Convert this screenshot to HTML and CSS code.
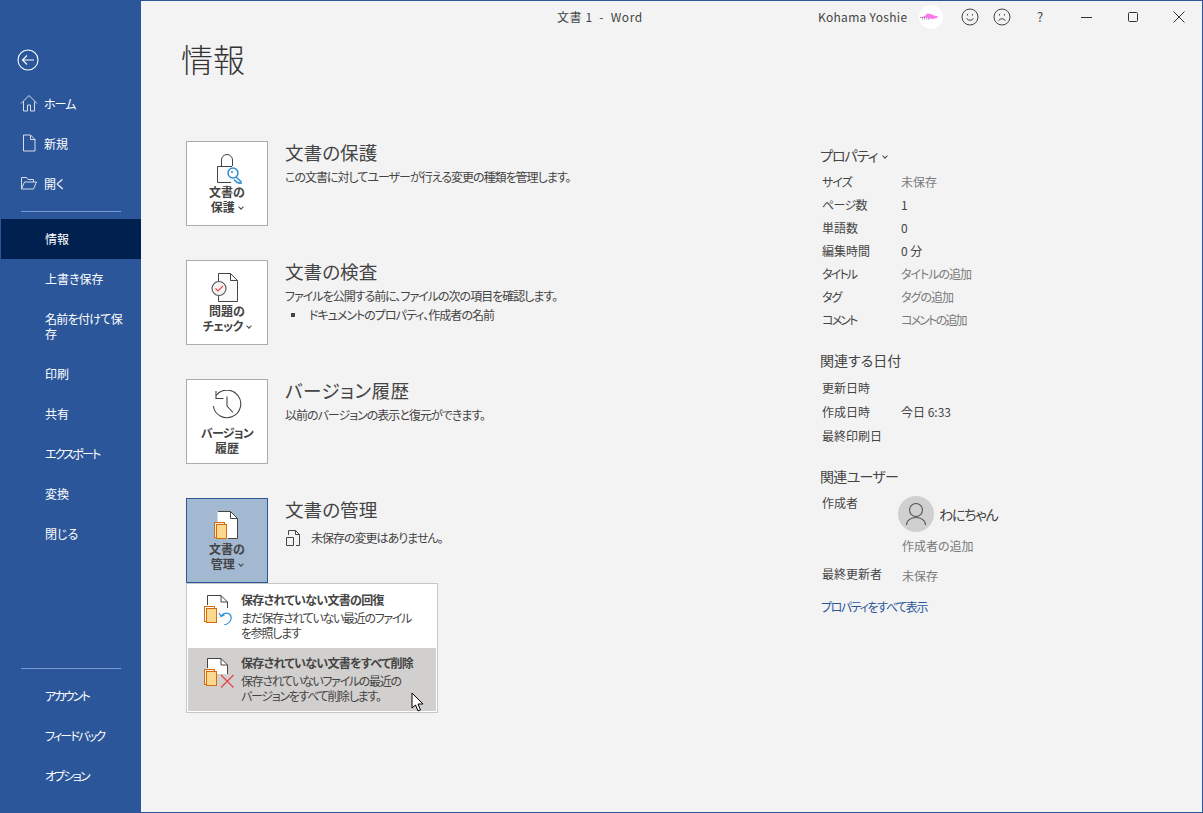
FILE: index.html
```html
<!DOCTYPE html>
<html lang="ja">
<head>
<meta charset="utf-8">
<title>文書 1 - Word</title>
<link rel="stylesheet" href="styles.css">
</head>
<body>
<div class="window">
  <nav class="sidebar">
    <div class="back">
      <svg width="24" height="24" viewBox="0 0 24 24" fill="none" stroke="#fff" stroke-width="1.1"><circle cx="12" cy="12" r="10"/><path d="M18 12H6.500M11 7.500 6.500 12l4.500 4.500"/></svg>
    </div>
    <a class="nav-item with-icon">
      <svg class="nav-icon" width="18" height="18" viewBox="0 0 18 18" fill="none" stroke="#d8dde8" stroke-width="1"><path d="M1 9.500 9 1.500l8 8M3.500 7.500V17H7.500V11h3v6h4V7.500"/></svg>
      <span class="kana">ホーム</span>
    </a>
    <a class="nav-item with-icon">
      <svg class="nav-icon" width="18" height="18" viewBox="0 0 18 18" fill="none" stroke="#d8dde8" stroke-width="1"><path d="M3.500 1h7l4.500 4.500V17h-11.500zM10.500 1v4.500h4.500"/></svg>
      <span>新規</span>
    </a>
    <a class="nav-item with-icon">
      <svg class="nav-icon" width="18" height="18" viewBox="0 0 18 18" fill="none" stroke="#d8dde8" stroke-width="1"><path d="M1.500 15V3.500h5l1.500 2h5.500V8M1.500 15l3-7H16.500l-3 7z"/></svg>
      <span>開く</span>
    </a>
    <div class="nav-rule rule-top"></div>
    <a class="nav-item active">情報</a>
    <a class="nav-item">上書き保存</a>
    <a class="nav-item tall"><span class="mixed">名前を付けて保存</span></a>
    <a class="nav-item">印刷</a>
    <a class="nav-item">共有</a>
    <a class="nav-item"><span class="kana-tight">エクスポート</span></a>
    <a class="nav-item">変換</a>
    <a class="nav-item">閉じる</a>
    <div class="nav-spacer"></div>
    <div class="nav-rule rule-bottom"></div>
    <a class="nav-item"><span class="kana-tight">アカウント</span></a>
    <a class="nav-item"><span class="kana-tight">フィードバック</span></a>
    <a class="nav-item"><span class="kana-tight">オプション</span></a>
  </nav>

  <main class="main">
    <header class="titlebar">
      <div class="doc-title">文書 1&nbsp;&nbsp;-&nbsp;&nbsp;Word</div>
      <div class="user">Kohama Yoshie</div>
      <div class="user-pic">
        <svg width="24" height="24" viewBox="0 0 24 24"><circle cx="12" cy="12" r="12" fill="#fff"/><path d="M1 12.500 6 11l2-2.500 4 .5 3 1.500 4 1-1 1.500-5 1-4-.5-3-1z" fill="#ff78f0"/><path d="M1 12.500h6M3 14h8" stroke="#333" stroke-width=".6" stroke-dasharray="1 1"/></svg>
      </div>
      <svg class="face smile" width="18" height="18" viewBox="0 0 18 18" fill="none" stroke="#444"><circle cx="9" cy="9" r="8"/><path d="M5.500 10.500q3.500 3.500 7 0"/><path d="M6.500 6v1.500M11.500 6v1.500"/></svg>
      <svg class="face frown" width="18" height="18" viewBox="0 0 18 18" fill="none" stroke="#444"><circle cx="9" cy="9" r="8"/><path d="M5.500 12.500q3.500-3.500 7 0"/><path d="M6.500 6v1.500M11.500 6v1.500"/></svg>
      <div class="help">?</div>
      <svg class="win min" width="12" height="12" viewBox="0 0 12 12" stroke="#333"><path d="M0 6.500h11"/></svg>
      <svg class="win max" width="12" height="12" viewBox="0 0 12 12" fill="none" stroke="#333"><rect x="1.500" y="1.500" width="9" height="9" rx="1"/></svg>
      <svg class="win cls" width="12" height="12" viewBox="0 0 12 12" stroke="#333"><path d="M.5.500l11 11M11.500.500l-11 11"/></svg>
    </header>

    <h1 class="page-title">情報</h1>

    <div class="content">
      <div class="sections">
        <section class="section">
          <div class="tile">
            <svg class="tile-icon" width="32" height="32" viewBox="0 0 32 32" fill="none">
              <path d="M10.500 14V8a5.500 5.500 0 0 1 11 0v6" stroke="#444"/>
              <path d="M21 14.500H6.500v16H20" fill="#fafafa" stroke="#444"/>
              <circle cx="22" cy="21" r="5" fill="#fff" stroke="#2e8fd6" stroke-width="1.500"/>
              <path d="M25 25l5 4.500V32h-2v-1.500h-2l-3-3" stroke="#2e8fd6" stroke-width="1.500"/>
              <circle cx="21" cy="20" r="1" fill="#2e8fd6"/>
            </svg>
            <div class="tile-label">文書の<br>保護 <span class="chev"></span></div>
          </div>
          <div class="info">
            <h2>文書の保護</h2>
            <p>この文書に対してユーザーが行える変更の種類を管理します。</p>
          </div>
        </section>

        <section class="section">
          <div class="tile">
            <svg class="tile-icon" width="32" height="32" viewBox="0 0 32 32" fill="none">
              <path d="M7.500 10V2.500H19.500L26.500 9.500V30.500H7.500V25" fill="#fafafa" stroke="#444"/>
              <path d="M19.500 2.500V9.500H26.500" stroke="#444"/>
              <circle cx="8" cy="17.500" r="7" fill="#f4f4f4" stroke="#555" stroke-width="1.100"/>
              <path d="M4.500 17.500l2.500 2.500 5-5" stroke="#e8484e" stroke-width="1.200"/>
            </svg>
            <div class="tile-label">問題の<br><span class="mixed">チェック</span> <span class="chev"></span></div>
          </div>
          <div class="info">
            <h2>文書の検査</h2>
            <p>ファイルを公開する前に、ファイルの次の項目を確認します。</p>
            <ul class="bullets"><li>ドキュメントのプロパティ、作成者の名前</li></ul>
          </div>
        </section>

        <section class="section">
          <div class="tile">
            <svg class="tile-icon" width="32" height="32" viewBox="0 0 32 32" fill="none" stroke="#444" stroke-width="1.100">
              <path d="M5 5.500A13.800 13.800 0 1 1 2.300 16"/>
              <path d="M5 1v7.500h7.500"/>
              <path d="M16 6.500V16l6 6.500"/>
            </svg>
            <div class="tile-label label-low"><span class="mixed">バージョン</span><br>履歴</div>
          </div>
          <div class="info">
            <h2 class="wide">バージョン履歴</h2>
            <p>以前のバージョンの表示と復元ができます。</p>
          </div>
        </section>

        <section class="section manage">
          <div class="tile selected">
            <svg class="tile-icon" width="32" height="32" viewBox="0 0 32 32" fill="none">
              <path d="M6.500 2.500H19.500L26.500 9.500V29.500H6.500z" fill="#fff"/>
              <path d="M7 2.500H19.500L26.500 9.500V29.500H17" stroke="#444"/>
              <path d="M19.500 2.500V9.500H26.500" stroke="#444"/>
              <rect x="3.500" y="13.500" width="10" height="15" fill="#e9eef3" stroke="#d96b0b"/>
              <rect x="5.500" y="15.500" width="10" height="14" fill="#fbd98e" stroke="#d96b0b"/>
            </svg>
            <div class="tile-label">文書の<br>管理 <span class="chev"></span></div>
          </div>
          <div class="info">
            <h2>文書の管理</h2>
            <div class="status">
              <svg width="16" height="18" viewBox="0 0 16 18" fill="none" stroke="#444"><path d="M3.500 6V1.500H10.500L14.500 5.500V16.500H11M10.500 1.500V5.500H14.500"/><path d="M1.500 8.500H8.500V16.500H1.500z"/></svg>
              <p>未保存の変更はありません。</p>
            </div>
          </div>

          <div class="menu">
            <div class="menu-item">
              <svg class="menu-icon" width="32" height="32" viewBox="0 0 32 32" fill="none">
                <path d="M5.500 15V2.500H19L25.500 9V15z" fill="#fff"/>
                <path d="M5.500 12V2.500H19L25.500 9V15M19 2.500V9H25.500" stroke="#444"/>
                <rect x="2.500" y="13.500" width="10" height="15" fill="#fff" stroke="#d96b0b"/>
                <rect x="4.500" y="15.500" width="10" height="14" fill="#fbd98e" stroke="#d96b0b"/>
                <path d="M17 20l2 3.500 3.500-1.500M19 23c4-5 11-3 10 3-.6 3-3 5-7 6" stroke="#2e8fd6" stroke-width="1.200"/>
              </svg>
              <div class="menu-text">
                <strong>保存されていない文書の回復</strong>
                <span>まだ保存されていない最近のファイル<br>を参照します</span>
              </div>
            </div>
            <div class="menu-item hover">
              <svg class="menu-icon" width="32" height="32" viewBox="0 0 32 32" fill="none">
                <path d="M5.500 17V2.500H19L25.500 9V18H15z" fill="#fff"/>
                <path d="M5.500 12V2.500H19L25.500 9V18M19 2.500V9H25.500" stroke="#444"/>
                <rect x="2.500" y="13.500" width="10" height="15" fill="#eee" stroke="#d96b0b"/>
                <rect x="4.500" y="15.500" width="10" height="14" fill="#fbd98e" stroke="#d96b0b"/>
                <path d="M19 19l12.500 12.500M31.500 19 19 31.500" stroke="#e8484e" stroke-width="1.400"/>
              </svg>
              <div class="menu-text">
                <strong>保存されていない文書をすべて削除</strong>
                <span>保存されていないファイルの最近の<br>バージョンをすべて削除します。</span>
              </div>
              <svg class="cursor" width="14" height="20" viewBox="0 0 14 20"><path d="M1 1v15l3.500-3 2.500 6 2.500-1-2.500-6H12z" fill="#fff" stroke="#000"/></svg>
            </div>
          </div>
        </section>
      </div>

      <aside class="props">
        <h3 class="props-head first">プロパティ <span class="chev"></span></h3>
        <dl class="rows">
          <div class="row"><dt class="kana">サイズ</dt><dd class="muted">未保存</dd></div>
          <div class="row"><dt class="mixed">ページ数</dt><dd>1</dd></div>
          <div class="row"><dt>単語数</dt><dd>0</dd></div>
          <div class="row"><dt>編集時間</dt><dd>0 分</dd></div>
          <div class="row"><dt class="kana-tight">タイトル</dt><dd class="muted kana">タイトルの追加</dd></div>
          <div class="row"><dt class="kana">タグ</dt><dd class="muted kana">タグの追加</dd></div>
          <div class="row"><dt class="kana-tight">コメント</dt><dd class="muted kana-tight">コメントの追加</dd></div>
        </dl>
        <h3 class="props-head dates">関連する日付</h3>
        <dl class="rows date-rows">
          <div class="row"><dt>更新日時</dt><dd></dd></div>
          <div class="row"><dt>作成日時</dt><dd>今日 6:33</dd></div>
          <div class="row"><dt>最終印刷日</dt><dd></dd></div>
        </dl>
        <h3 class="props-head people">関連ユーザー</h3>
        <div class="author">
          <div class="author-label">作成者</div>
          <div class="author-body">
            <div class="person">
              <div class="avatar">
                <svg width="36" height="36" viewBox="0 0 36 36" fill="none" stroke="#555" stroke-width="1.100"><circle cx="18" cy="14" r="6.500"/><path d="M8.500 29c0-10 19-10 19 0"/></svg>
              </div>
              <span class="person-name">わにちゃん</span>
            </div>
            <div class="add-author">作成者の追加</div>
          </div>
        </div>
        <div class="last-row"><span class="last-label">最終更新者</span><span class="muted last-value">未保存</span></div>
        <a class="show-all">プロパティをすべて表示</a>
      </aside>
    </div>
  </main>
</div>
</body>
</html>
```

FILE: styles.css
```css
* { box-sizing: border-box; }
html, body { margin: 0; height: 100%; }
body {
  font-family: "Noto Sans CJK JP", "Noto Sans", sans-serif;
  font-feature-settings: "palt";
  font-size: 12px;
  color: #444;
  background: #f3f3f3;
  overflow: hidden;
}
.window {
  width: 1203px;
  height: 813px;
  border: 1px solid #2b579a;
  display: flex;
}
.kana { letter-spacing: -1px; }
.kana-tight { letter-spacing: -1.8px; }
.mixed { letter-spacing: -.7px; }

/* Sidebar */
.sidebar {
  width: 140px;
  flex: none;
  background: #2b579a;
  color: #fff;
  display: flex;
  flex-direction: column;
  padding-bottom: 16px;
}
.back { height: 83px; padding: 47px 0 0 15px; }
.back svg { display: block; }
.nav-item {
  height: 40px;
  display: flex;
  align-items: center;
  padding: 0 8px 2px 44px;
  line-height: 15px;
  color: #fff;
}
.nav-item.with-icon { padding-left: 19px; gap: 6px; }
.nav-icon { flex: none; }
.nav-item.active { background: #002050; }
.nav-item.tall { height: 55px; }
.nav-rule { height: 1px; background: #7a9bd0; margin: 0 20px; flex: none; }
.rule-top { margin-top: 7px; margin-bottom: 7px; }
.nav-spacer { flex: 1; }
.rule-bottom { margin-bottom: 7px; }

/* Main */
.main { flex: 1; min-width: 0; display: flex; flex-direction: column; }
.titlebar {
  height: 31px;
  display: flex;
  align-items: center;
  padding-left: 416px;
  flex: none;
}
.doc-title { width: 261px; white-space: nowrap; font-size: 12px; letter-spacing: .6px; }
.user { font-size: 12px; width: 101px; white-space: nowrap; letter-spacing: .3px; }
.user-pic { width: 24px; height: 24px; }
.face { flex: none; }
.smile { margin-left: 18px; }
.frown { margin-left: 14px; }
.help { margin-left: 26px; font-size: 13px; width: 10px; }
.win { flex: none; }
.min { margin-left: 34px; }
.max { margin-left: 34px; }
.cls { margin-left: 34px; }

.page-title {
  margin: 0 0 0 40px;
  height: 109px;
  padding-top: 4px;
  font-size: 32px;
  line-height: 44px;
  font-weight: 300;
  color: #333;
}
.content { display: flex; padding-left: 45px; }
.sections { width: 634px; flex: none; display: flex; flex-direction: column; gap: 34px; }

.section { display: flex; position: relative; }
.tile {
  width: 82px;
  height: 85px;
  flex: none;
  background: #fff;
  border: 1px solid #ababab;
  display: flex;
  flex-direction: column;
  align-items: center;
  padding-top: 10px;
}
.tile.selected { background: #a3b8d1; border-color: #2b579a; }
.tile-icon { display: block; flex: none; }
.tile-label {
  text-align: center;
  font-weight: 700;
  font-size: 12px;
  line-height: 15px;
  color: #444;
  white-space: nowrap;
}
.label-low { margin-top: 3px; }
.chev {
  display: inline-block;
  width: 4px;
  height: 4px;
  border-right: 1px solid #444;
  border-bottom: 1px solid #444;
  transform: rotate(45deg);
  margin: 0 0 3px 2px;
}
.info { margin-left: 17px; margin-top: -1px; }
.info h2 {
  margin: 0;
  font-weight: 400;
  font-size: 18.6px;
  line-height: 24px;
  color: #444;
}
.info h2.wide { letter-spacing: .5px; }
.info p { margin: 0; line-height: 16px; font-size: 12px; color: #444; white-space: nowrap; letter-spacing: -1px; }
.info h2 + p { margin-top: 5px; }
.bullets { list-style: none; margin: 3px 0 0; padding: 0 0 0 24px; line-height: 16px; position: relative; letter-spacing: -1px; }
.bullets li::before {
  content: "";
  position: absolute;
  left: 6px;
  top: 6px;
  width: 4px;
  height: 4px;
  background: #444;
}
.status { display: flex; align-items: center; gap: 10px; margin-top: 8px; }
.status svg { display: block; flex: none; }

/* Dropdown */
.menu {
  position: absolute;
  left: 0;
  top: 85px;
  width: 252px;
  height: 130px;
  background: #fff;
  border: 1px solid #c6c6c6;
  padding: 0 1px;
  z-index: 2;
}
.menu-item {
  height: 64px;
  display: flex;
  position: relative;
  padding: 8px 0 0 14px;
}
.menu-item.hover { background: #d2d0ce; height: 63px; padding-top: 7px; }
.menu-icon { flex: none; margin-top: 1px; }
.menu-text { margin-left: 7px; line-height: 15px; white-space: nowrap; letter-spacing: -1.3px; }
.menu-text strong { display: block; font-weight: 700; color: #444; margin-bottom: 3px; letter-spacing: -.7px; }
.menu-text span { display: block; color: #444; }
.cursor { position: absolute; left: 223px; top: 44px; }

/* Properties */
.props { width: 330px; flex: none; padding-top: 4px; }
.props-head {
  margin: 0;
  font-size: 14px;
  line-height: 20px;
  font-weight: 400;
  color: #444;
}
.props-head.first { letter-spacing: -1px; }
.props-head.first .chev { margin-left: 3px; }
.props-head.people { letter-spacing: -.7px; }
.rows { margin: 5px 0 0; }
.row { display: flex; height: 23px; align-items: center; padding-left: 2px; }
.row dt { width: 79px; flex: none; }
.row dd { margin: 0; }
.muted { color: #7a7a7a; }
.dates { margin-top: 19px; }
.date-rows { margin-top: 5px; }
.date-rows .row { height: 24px; }
.people { margin-top: 19px; }
.author { display: flex; padding-left: 2px; height: 70px; }
.author-label { width: 76px; flex: none; line-height: 20px; padding-top: 7px; }
.author-body { display: flex; flex-direction: column; padding-top: 10px; }
.person { display: flex; align-items: center; gap: 5px; }
.avatar { width: 36px; height: 36px; border-radius: 50%; background: #d0d0d0; }
.avatar svg { display: block; }
.person-name { font-size: 14px; color: #444; letter-spacing: -1.2px; }
.add-author { color: #7a7a7a; margin: 5px 0 0 4px; line-height: 17px; }
.last-row { display: flex; padding-left: 2px; margin-top: 9px; line-height: 18px; }
.last-label { width: 80px; }
.last-value { padding-top: 2px; }
.show-all { display: block; color: #2b579a; margin-top: 13px; padding-left: 1px; line-height: 18px; letter-spacing: -1.4px; }
```
